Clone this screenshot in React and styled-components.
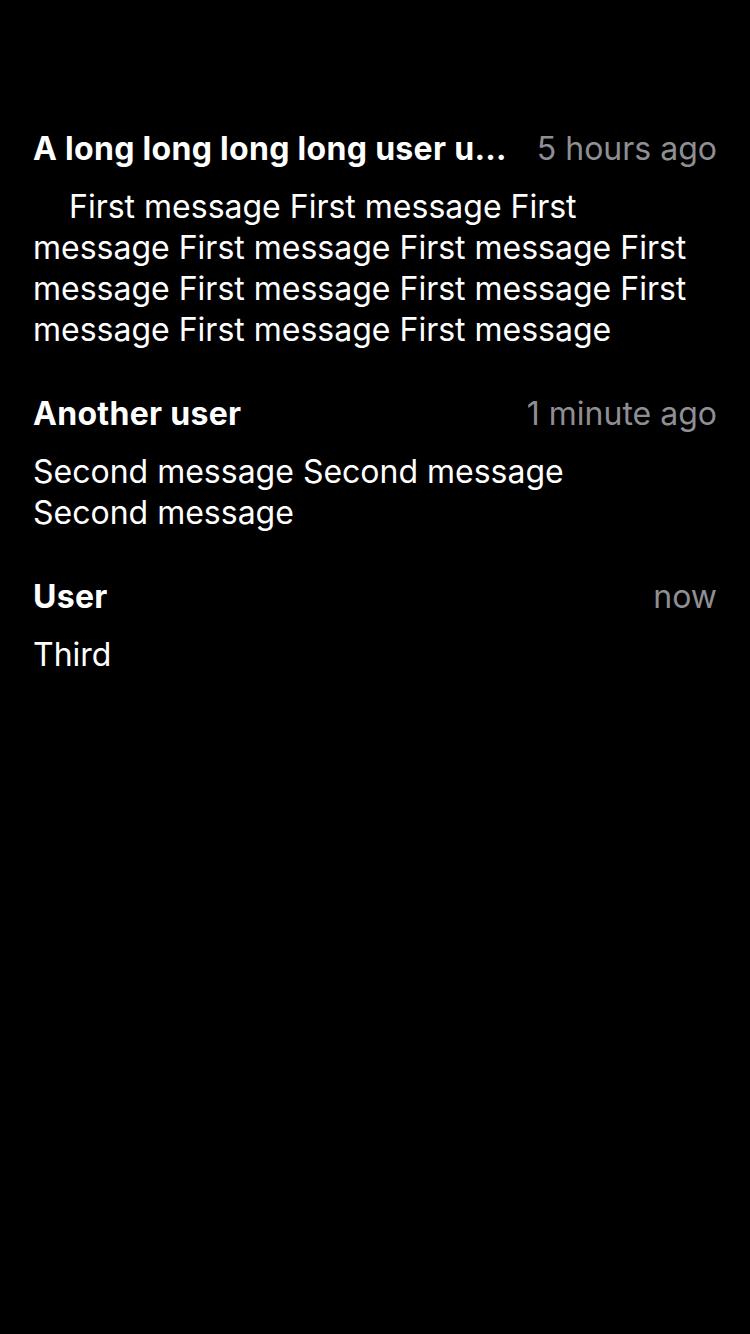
import React from 'react';
import styled, { createGlobalStyle } from 'styled-components';

const messages = [
    {
        id: 1,
        user: 'A long long long long user username',
        time: '5 hours ago',
        text: '    First message First message First message First message First message First message First message First message First message First message First message',
    },
    { id: 2, user: 'Another user', time: '1 minute ago', text: 'Second message Second message\nSecond message' },
    { id: 3, user: 'User', time: 'now', text: 'Third' },
];

const GlobalStyle = createGlobalStyle`
    html, body {
        margin: 0;
        padding: 0;
        background: #000;
    }
    body {
        font-family: Inter, "Liberation Sans", sans-serif;
    }
`;

const App = () => {
    return (
        <>
            <GlobalStyle />
            <Screen>
                {messages.map((m) => (
                    <Message key={m.id}>
                        <Header>
                            <UserName>{m.user}</UserName>
                            <Time>{m.time}</Time>
                        </Header>
                        <Body>{m.text}</Body>
                    </Message>
                ))}
            </Screen>
        </>
    );
};

const Screen = styled.div`
    display: flex;
    flex-direction: column;
    gap: 43px;
    min-height: 1334px;
    box-sizing: border-box;
    padding: 128px 33px 0 33px;
    background: #000;
`;

const Message = styled.div`
    display: flex;
    flex-direction: column;
    gap: 17px;
`;

const Header = styled.div`
    display: flex;
    align-items: center;
    justify-content: space-between;
    line-height: 41px;
    font-size: 32px;
`;

const UserName = styled.div`
    color: #fff;
    font-weight: 700;
    white-space: nowrap;
    overflow: hidden;
    text-overflow: ellipsis;
    min-width: 0;
    letter-spacing: 0.3px;
`;

const Time = styled.div`
    color: #8e8e93;
    flex-shrink: 0;
    margin-left: 20px;
`;

const Body = styled.div`
    color: #fff;
    font-size: 32px;
    line-height: 41px;
    white-space: pre-wrap;
`;

export default App;
